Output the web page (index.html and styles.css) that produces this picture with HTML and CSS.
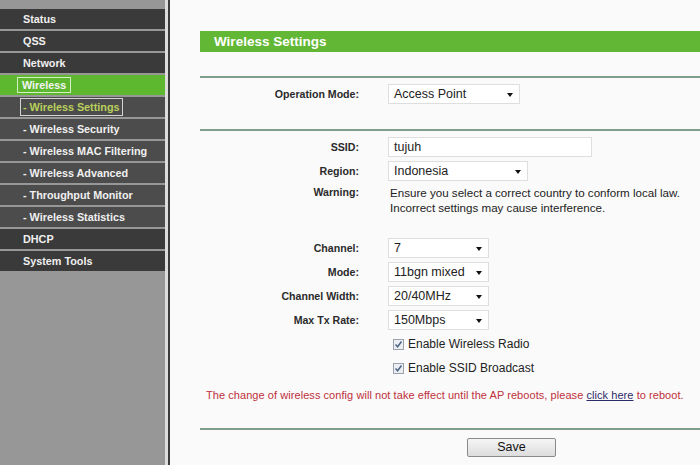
FILE: index.html
```html
<!DOCTYPE html>
<html>
<head>
<meta charset="utf-8">
<link rel="stylesheet" href="styles.css">
</head>
<body>
<div class="page">
  <nav class="sidebar">
    <div class="item main">Status</div>
    <div class="item main">QSS</div>
    <div class="item main">Network</div>
    <div class="item active"><span class="box">Wireless</span></div>
    <div class="item sub current"><span class="box">- Wireless Settings</span></div>
    <div class="item sub">- Wireless Security</div>
    <div class="item sub">- Wireless MAC Filtering</div>
    <div class="item sub">- Wireless Advanced</div>
    <div class="item sub">- Throughput Monitor</div>
    <div class="item sub">- Wireless Statistics</div>
    <div class="item main">DHCP</div>
    <div class="item main">System Tools</div>
  </nav>
  <div class="strip"></div>
  <div class="divider"></div>
  <main class="content">
    <div class="title">Wireless Settings</div>
    <div class="rule r1"></div>
    <div class="row opmode">
      <div class="label">Operation Mode:</div>
      <div class="select w132">Access Point</div>
    </div>
    <div class="rule r2"></div>
    <div class="row first">
      <div class="label">SSID:</div>
      <div class="input">tujuh</div>
    </div>
    <div class="row">
      <div class="label">Region:</div>
      <div class="select w140">Indonesia</div>
    </div>
    <div class="row warn">
      <div class="label">Warning:</div>
      <div class="note">Ensure you select a correct country to conform local law.<br>Incorrect settings may cause interference.</div>
    </div>
    <div class="row chan">
      <div class="label">Channel:</div>
      <div class="select w101">7</div>
    </div>
    <div class="row">
      <div class="label">Mode:</div>
      <div class="select w101">11bgn mixed</div>
    </div>
    <div class="row">
      <div class="label">Channel Width:</div>
      <div class="select w101">20/40MHz</div>
    </div>
    <div class="row">
      <div class="label">Max Tx Rate:</div>
      <div class="select w101">150Mbps</div>
    </div>
    <div class="row check">
      <div class="label"></div>
      <div class="cbline"><span class="cb"><svg width="9" height="9" viewBox="0 0 9 9"><path d="M1.5 4.5 L3.6 6.8 L7.5 1.5" fill="none" stroke="#4a6585" stroke-width="1.5"/></svg></span>Enable Wireless Radio</div>
    </div>
    <div class="row check">
      <div class="label"></div>
      <div class="cbline"><span class="cb"><svg width="9" height="9" viewBox="0 0 9 9"><path d="M1.5 4.5 L3.6 6.8 L7.5 1.5" fill="none" stroke="#4a6585" stroke-width="1.5"/></svg></span>Enable SSID Broadcast</div>
    </div>
    <p class="notice">The change of wireless config will not take effect until the AP reboots, please <a href="#">click here</a> to reboot.</p>
    <div class="rule r3"></div>
    <div class="actions"><button class="save">Save</button></div>
  </main>
</div>
</body>
</html>
```
FILE: styles.css
```css
html, body {
  margin: 0;
  padding: 0;
  height: 100%;
  overflow: hidden;
}
body {
  font-family: "Liberation Sans", Arial, sans-serif;
  background: #fafafa;
}
.page {
  display: flex;
  height: 465px;
}
.sidebar {
  width: 165px;
  flex: none;
  background: #979797;
  padding-top: 9px;
  display: flex;
  flex-direction: column;
  gap: 2px;
}
.item {
  height: 20px;
  line-height: 20px;
  font-size: 10.8px;
  font-weight: bold;
  color: #f0f0f0;
  padding-left: 23px;
  white-space: nowrap;
}
.item.main {
  background: #3a3a3a;
}
.item.sub {
  background: #4c4c4c;
}
.item.active {
  background: #5db82f;
  padding-left: 17px;
  display: flex;
  align-items: center;
}
.item.active .box {
  border: 1px solid #d6efc4;
  padding: 0 4px;
  height: 14px;
  line-height: 14px;
  color: #f4f4f4;
}
.item.current {
  padding-left: 20px;
  display: flex;
  align-items: center;
}
.item.current .box {
  border: 1px solid #d4d4d4;
  padding: 0 2px;
  height: 16px;
  line-height: 16px;
  color: #b9d05a;
}
.strip {
  width: 3px;
  flex: none;
  background: #dcdcdc;
}
.divider {
  width: 2px;
  flex: none;
  background: #3c3c3c;
}
.content {
  flex: 1;
  padding-left: 30px;
  min-width: 0;
}
.title {
  margin-top: 31px;
  height: 21px;
  line-height: 21px;
  background: #62b834;
  color: #fff;
  font-size: 13.5px;
  font-weight: bold;
  padding-left: 14px;
}
.rule {
  height: 2px;
  background: #7f9f8c;
}
.r1 { margin-top: 24px; }
.r2 { margin-top: 25px; }
.r3 { margin-top: 26px; }
.row {
  display: grid;
  grid-template-columns: 159px 1fr;
  column-gap: 29px;
  align-items: center;
  margin-top: 4px;
}
.row.opmode { margin-top: 6px; }
.row.first { margin-top: 6px; }
.row.warn { margin-top: 4px; align-items: start; }
.row.chan { margin-top: 23px; }
.label {
  text-align: right;
  font-size: 10.6px;
  font-weight: bold;
  color: #2a2a2a;
}
.select, .input {
  box-sizing: border-box;
  height: 20px;
  line-height: 18px;
  border: 1px solid #dedede;
  background: #fff;
  font-size: 12.5px;
  color: #222;
  padding-left: 5px;
  position: relative;
}
.input { width: 204px; height: 20px; }
.w132 { width: 132px; }
.w140 { width: 140px; }
.w101 { width: 101px; }
.select::after {
  content: "";
  position: absolute;
  right: 6px;
  top: 8px;
  border-left: 3.5px solid transparent;
  border-right: 3.5px solid transparent;
  border-top: 4px solid #111;
}
.warn .label { line-height: 15px; }
.note {
  font-size: 11.6px;
  line-height: 15px;
  color: #222;
  padding-left: 2px;
}
.row.check { height: 20px; }
.cbline {
  display: flex;
  align-items: center;
  font-size: 12px;
  color: #222;
  padding-left: 5px;
}
.cb {
  box-sizing: border-box;
  width: 11px;
  height: 11px;
  border: 1px solid #9aa3ad;
  background: #eceef1;
  margin-right: 4px;
  display: flex;
  align-items: center;
  justify-content: center;
}
.notice {
  margin: 10px 0 0 6px;
  font-size: 11px;
  line-height: 14px;
  letter-spacing: 0.06px;
  color: #c0303c;
  white-space: nowrap;
}
.notice a {
  color: #2d2a6a;
  text-decoration: underline;
}
.actions {
  margin-top: 7px;
  padding-left: 267px;
}
.save {
  width: 89px;
  height: 19px;
  box-sizing: border-box;
  border: 1px solid #8a8a8a;
  border-radius: 2px;
  background: linear-gradient(#f6f6f6, #dcdcdc);
  font-family: "Liberation Sans", Arial, sans-serif;
  font-size: 12.5px;
  color: #111;
  padding: 0;
  line-height: 17px;
}
```
